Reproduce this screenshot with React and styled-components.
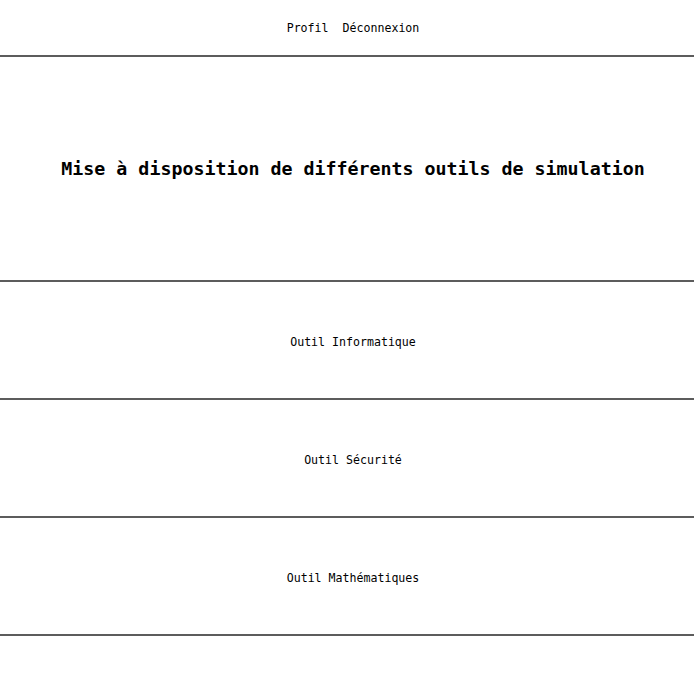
import React from "react";
import styled, { createGlobalStyle } from "styled-components";

const Global = createGlobalStyle`
  html, body { margin: 0; padding: 0; background: #fff; }
  body { font-family: "DejaVu Sans Mono", "Liberation Mono", monospace; color: #000; }
  *, *::before, *::after { box-sizing: border-box; }
`;

const Page = styled.div`
  display: flex;
  flex-direction: column;
  width: 100%;
`;

const Section = styled.div`
  display: flex;
  align-items: center;
  justify-content: center;
  height: ${(p) => p.$h}px;
  padding-left: 12px;
  padding-top: ${(p) => p.$pt || 0}px;
  border-bottom: 2px solid #5c5c5c;
`;

const Nav = styled.nav`
  display: flex;
  gap: 14px;
`;

const NavLink = styled.a`
  font-size: 11.6px;
  color: #000;
  text-decoration: none;
`;

const Title = styled.h1`
  margin: 0;
  font-size: 18.3px;
  font-weight: bold;
`;

const Tool = styled.span`
  font-size: 11.6px;
`;

export default function App() {
  const tools = ["Outil Informatique", "Outil Sécurité", "Outil Mathématiques"];
  return (
    <Page>
      <Global />
      <Section $h={57} $pt={1}>
        <Nav>
          <NavLink href="#">Profil</NavLink>
          <NavLink href="#">Déconnexion</NavLink>
        </Nav>
      </Section>
      <Section $h={225}>
        <Title>Mise à disposition de différents outils de simulation</Title>
      </Section>
      {tools.map((t) => (
        <Section key={t} $h={118} $pt={3}>
          <Tool>{t}</Tool>
        </Section>
      ))}
    </Page>
  );
}
